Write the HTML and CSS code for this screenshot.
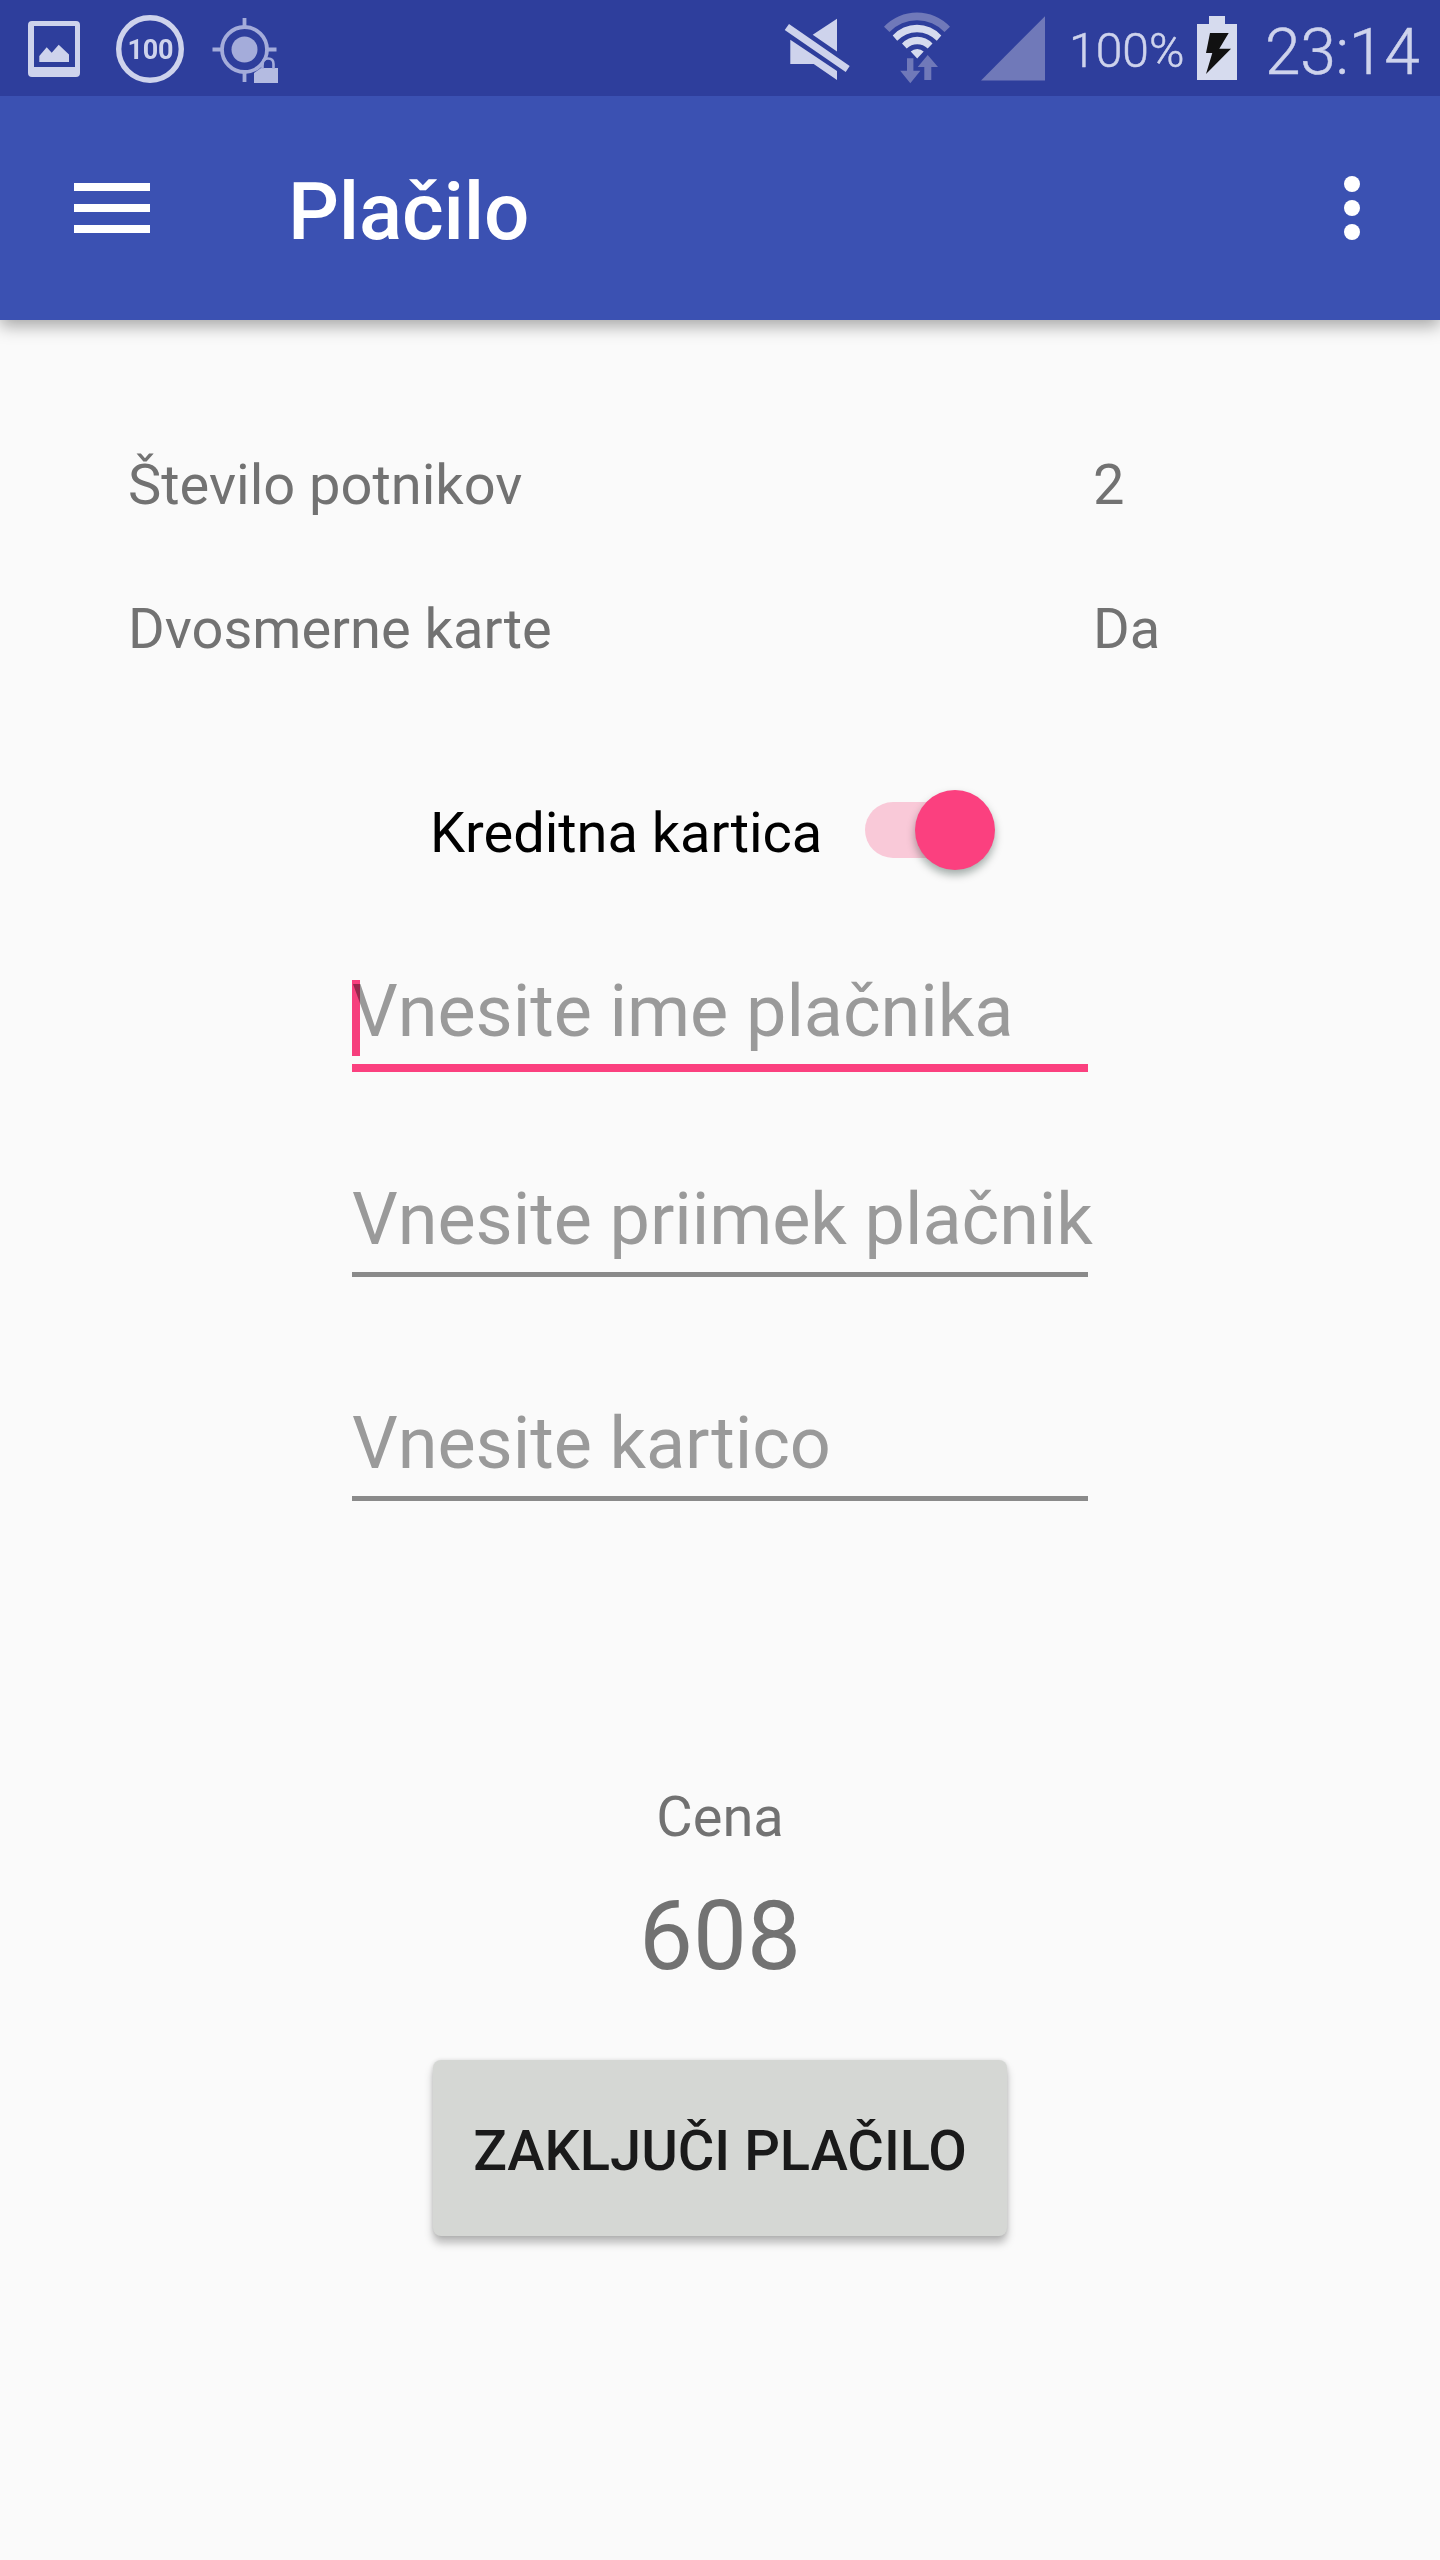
FILE: index.html
```html
<!DOCTYPE html>
<html lang="sl">
<head>
<meta charset="utf-8">
<title>Plačilo</title>
<link rel="stylesheet" href="styles.css">
</head>
<body>
<div class="status">
  <svg class="ico-picture" width="52" height="56" viewBox="28 21 52 56"><path fill="#ced3ec" fill-rule="evenodd" d="M32 21h44q4 0 4 4v48q0 4-4 4H32q-4 0-4-4V25q0-4 4-4zM34 26v41h41V26z"/><path fill="#ced3ec" d="M39.300 62v-6l7.400-8.700 5 5.500 7-8L69 54.500V62z"/></svg>
  <svg class="ico-hundred" width="68" height="68" viewBox="116 15 68 68"><circle cx="150" cy="49" r="31.300" fill="none" stroke="#ced3ec" stroke-width="5.400"/><text class="badge-text" x="150.500" y="59" text-anchor="middle" textLength="46">100</text></svg>
  <svg class="ico-gps" width="68" height="68" viewBox="211 16 68 68"><g fill="none" stroke="#a4acda" stroke-width="3.800"><circle cx="244.500" cy="49.500" r="22.500"/><path d="M244.500 18v9M244.500 72v10M212.500 49.500h9M267 49.500h9.500"/></g><circle cx="244.500" cy="49.500" r="13" fill="#a4acda"/><path d="M264 69v-5q0-4 4-4t4 4v5z" fill="#2e3e9c"/><path fill="#b4bbe1" d="M254 83V73l7-5h17v15z"/><path d="M262.500 69v-5q0-5.500 5.500-5.500t5.500 5.500v5" fill="none" stroke="#a4acda" stroke-width="2.600"/></svg>
  <span class="spacer"></span>
  <svg class="ico-mute" width="68" height="64" viewBox="783 17 68 64"><path fill="#ced3ec" d="M784.700 30l4.300-6 60.700 42-4 6zM837 18.700v32.800l-24.300-16.800zM790.300 39.700L837 71v9l-23.300-16h-23.400z"/></svg>
  <svg class="ico-wifi" width="68" height="74" viewBox="883 11 68 74"><path fill="#7079b9" d="M884 26.800a45.500 45.500 0 0 1 66 0l-5.500 5.200a38 38 0 0 0-55 0zM907 58.300h6.400v12.400h7l-10.100 12.600-10.100-12.600h6.800zM927.700 55L938 67h-6.700v13h-7V67h-6.600z"/><path fill="#d6dbee" d="M892.700 35.500a33 33 0 0 1 48.600 0l-4.500 5.300a27 27 0 0 0-39.600 0zM902 43.500a20.500 20.500 0 0 1 30.500 0l-4.800 5a15 15 0 0 0-21 0zM910.700 51.500a9.500 9.500 0 0 1 13 0l-6.500 7z"/></svg>
  <svg class="ico-signal" width="64" height="65" viewBox="981 16.500 64 65"><path fill="#7079b9" d="M981 81h64V16.700z"/></svg>
  <span class="percent">100%</span>
  <svg class="ico-battery" width="40" height="64" viewBox="1197 16 40 64"><path fill="#d6dbee" d="M1197 24h12v-8h16v8h12v56h-40z"/><path fill="#111" d="M1210 33h18.700l-9.400 15.700H1231L1206 74l6.300-21H1206z"/></svg>
  <span class="clock">23:14</span>
</div>
<header class="appbar">
  <svg width="76" height="50" viewBox="0 0 76 50"><path fill="#fff" d="M0 0h76v8H0zM0 21h76v8H0zM0 42h76v8H0z"/></svg>
  <h1 class="title">Plačilo</h1>
  <svg class="more" width="16" height="64" viewBox="0 0 16 64" fill="#fff"><circle cx="8" cy="8" r="8"/><circle cx="8" cy="32" r="8"/><circle cx="8" cy="56" r="8"/></svg>
</header>
<main class="content">
  <dl class="summary">
    <dt>Število potnikov</dt><dd>2</dd>
    <dt>Dvosmerne karte</dt><dd>Da</dd>
  </dl>
  <div class="toggle-row">
    <span>Kreditna kartica</span>
    <div class="switch"><div class="thumb"></div></div>
  </div>
  <form class="fields">
    <div class="field focused">Vnesite ime plačnika<i class="caret"></i></div>
    <div class="field">Vnesite priimek plačnik</div>
    <div class="field">Vnesite kartico</div>
  </form>
  <div class="price-label">Cena</div>
  <div class="price">608</div>
  <button class="submit">ZAKLJUČI PLAČILO</button>
</main>
</body>
</html>
```
FILE: styles.css
```css
* { box-sizing: border-box; }
body {
  margin: 0;
  width: 1440px;
  height: 2560px;
  overflow: hidden;
  background: #fafafa;
  color: #727272;
  font-family: Roboto, "Noto Sans", sans-serif;
  font-size: 56px;
  line-height: 64px;
}
svg { display: block; flex: none; }

.status {
  position: relative;
  z-index: 1;
  display: flex;
  align-items: flex-start;
  height: 96px;
  padding-left: 28px;
  background: #2e3e9c;
  color: #ced3ec;
  white-space: nowrap;
}
.spacer { flex: 1; }
.ico-picture { margin-top: 21px; }
.ico-hundred { margin: 15px 0 0 36px; }
.badge-text { font-size: 27px; font-weight: 700; fill: #ced3ec; }
.ico-gps { margin: 16px 0 0 27px; }
.ico-mute { margin-top: 17px; }
.ico-wifi { margin: 11px 0 0 32px; }
.ico-signal { margin: 16px 0 0 30px; }
.percent, .clock {
  font-weight: 300;
  -webkit-text-stroke: .5px #ced3ec;
}
.percent {
  width: 128px;
  margin: 19px 0 0 24px;
  font-size: 48px;
}
.ico-battery { margin-top: 16px; }
.clock {
  width: 179px;
  margin: 21px 0 0 24px;
  padding-left: 4px;
  font-size: 64px;
  letter-spacing: -.2px;
}

.appbar {
  display: flex;
  align-items: center;
  height: 224px;
  padding: 0 80px 0 74px;
  background: #3b51b2;
  box-shadow: 0 6px 16px rgba(0, 0, 0, .34);
}
.title {
  margin: 8px 0 0 138px;
  color: #fff;
  font-size: 80px;
  font-weight: 500;
  line-height: 94px;
  letter-spacing: -.2px;
}
.more { margin-left: auto; }

.content {
  display: flex;
  flex-direction: column;
  align-items: center;
  padding-top: 133px;
}
.summary {
  display: grid;
  grid-template-columns: 965px 1fr;
  row-gap: 80px;
  align-self: stretch;
  margin: 0 0 0 128px;
}
.summary dt, .summary dd { margin: 0; }

.toggle-row {
  display: flex;
  align-items: center;
  justify-content: space-between;
  width: 582px;
  height: 80px;
  margin-top: 129px;
  padding-left: 1px;
  color: #000;
}
.toggle-row span { margin-top: 6px; white-space: nowrap; letter-spacing: -.05px; }
.switch {
  display: flex;
  align-items: center;
  justify-content: flex-end;
  width: 120px;
  height: 56px;
  margin-right: 26px;
  border-radius: 28px;
  background: #f9c9d8;
}
.thumb {
  flex: none;
  width: 80px;
  height: 80px;
  margin-right: -10px;
  border-radius: 50%;
  background: #fb407f;
  box-shadow: 0 5px 8px rgba(0, 30, 20, .35);
}

.fields {
  display: flex;
  flex-direction: column;
  width: 736px;
  margin-top: 99px;
}
.field {
  position: relative;
  height: 100px;
  margin-bottom: 124px;
  border-bottom: 5px solid #8a8a8a;
  color: #9a9a9a;
  font-size: 72px;
  line-height: 86px;
  letter-spacing: -.06px;
  white-space: nowrap;
}
.field.focused {
  height: 103px;
  margin-bottom: 105px;
  border-bottom: 8px solid #fb407f;
}
.caret {
  position: absolute;
  left: 0;
  top: 11px;
  width: 8px;
  height: 76px;
  background: #fb407f;
  mix-blend-mode: multiply;
}

.price-label { margin-top: 160px; }
.price {
  margin-top: 31px;
  font-size: 96px;
  line-height: 112px;
}
.submit {
  width: 574px;
  height: 176px;
  margin-top: 68px;
  padding: 5px 0 0;
  border: 0;
  border-radius: 8px;
  background: #d5d7d4;
  box-shadow: 0 7px 9px rgba(0, 0, 0, .26), 0 0 4px rgba(0, 0, 0, .12);
  color: #1a1a1a;
  font: 500 56px/64px Roboto, "Noto Sans", sans-serif;
  white-space: nowrap;
}
```
